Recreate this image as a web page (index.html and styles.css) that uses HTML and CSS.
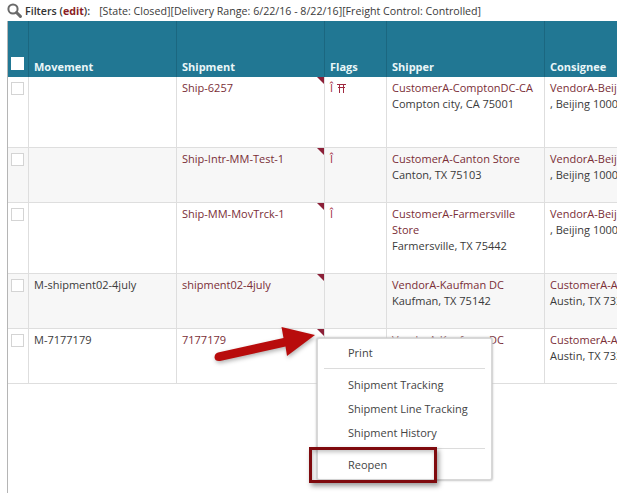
FILE: index.html
```html
<!DOCTYPE html>
<html lang="en">
<head>
<meta charset="utf-8">
<title>Shipments</title>
<link rel="stylesheet" href="styles.css">
</head>
<body>
<div class="filters">
  <svg class="search" width="15" height="15" viewBox="0 0 15 15"><circle cx="6" cy="6" r="4.6" fill="none" stroke="#6a6a6a" stroke-width="2"/><path d="M9.500 9.500 13.400 13.400" stroke="#6a6a6a" stroke-width="3" stroke-linecap="round"/></svg>
  <span class="filters-label">Filters (<span class="edit">edit</span>):</span>
  <span class="filters-value">[State: Closed][Delivery Range: 6/22/16 - 8/22/16][Freight Control: Controlled]</span>
</div>
<div class="grid-wrap">
<table class="grid">
  <colgroup>
    <col class="c-check"><col class="c-move"><col class="c-ship"><col class="c-flags"><col class="c-shipper"><col class="c-cons">
  </colgroup>
  <thead>
    <tr>
      <th><span class="box box-head"></span></th>
      <th>Movement</th><th>Shipment</th><th>Flags</th><th>Shipper</th><th>Consignee</th>
    </tr>
  </thead>
  <tbody>
    <tr class="r1">
      <td><span class="box"></span></td><td></td>
      <td class="mark"><a>Ship-6257</a></td>
      <td><a class="flag">Î</a> <svg class="torii" width="9" height="9" viewBox="0 0 9 9"><path d="M0 .5H9M1 3.500H8M2.500 .5V9M6.500 .5V9" fill="none" stroke="#a02a40" stroke-width="1"/></svg></td>
      <td><a>CustomerA-ComptonDC-CA</a><br>Compton city, CA 75001</td>
      <td><a>VendorA-Beijing</a><br>, Beijing 100000</td>
    </tr>
    <tr class="r2 alt">
      <td><span class="box"></span></td><td></td>
      <td class="mark"><a>Ship-Intr-MM-Test-1</a></td>
      <td><a class="flag">Î</a></td>
      <td><a>CustomerA-Canton Store</a><br>Canton, TX 75103</td>
      <td><a>VendorA-Beijing</a><br>, Beijing 100000</td>
    </tr>
    <tr class="r3">
      <td><span class="box"></span></td><td></td>
      <td class="mark"><a>Ship-MM-MovTrck-1</a></td>
      <td><a class="flag">Î</a></td>
      <td><a>CustomerA-Farmersville Store</a><br>Farmersville, TX 75442</td>
      <td><a>VendorA-Beijing</a><br>, Beijing 100000</td>
    </tr>
    <tr class="r4 alt">
      <td><span class="box"></span></td><td>M-shipment02-4july</td>
      <td class="mark"><a>shipment02-4july</a></td>
      <td></td>
      <td><a>VendorA-Kaufman DC</a><br>Kaufman, TX 75142</td>
      <td><a>CustomerA-Austin</a><br>Austin, TX 73301</td>
    </tr>
    <tr class="r5">
      <td><span class="box"></span></td><td>M-7177179</td>
      <td class="mark"><a>7177179</a></td>
      <td></td>
      <td><a>VendorA-Kaufman DC</a><br>Kaufman, TX 75142</td>
      <td><a>CustomerA-Austin</a><br>Austin, TX 73301</td>
    </tr>
  </tbody>
</table>
</div>
<div class="menu">
  <div class="menu-item">Print</div>
  <div class="menu-sep"></div>
  <div class="menu-item">Shipment Tracking</div>
  <div class="menu-item">Shipment Line Tracking</div>
  <div class="menu-item">Shipment History</div>
  <div class="menu-sep"></div>
  <div class="menu-item">Reopen</div>
</div>
<div class="callout"></div>
<svg class="arrow" width="110" height="40" viewBox="210 322 110 40"><path d="M218 352.500 283.500 338 281.500 327 315 335 287 356 285.500 346.500 220 361Q215 361.500 214.500 357.500 214.500 353.500 218 352.500Z" fill="#b80c0c"/></svg>
</body>
</html>
```
FILE: styles.css
```css
html, body {
  margin: 0;
  height: 100%;
  overflow: hidden;
  background: #fff;
}
body {
  font: 11px/16px "Open Sans", sans-serif;
  color: #3a3a3a;
}
.filters {
  height: 21px;
  display: flex;
  align-items: center;
  padding-left: 7px;
  box-sizing: border-box;
  font-size: 10.67px;
  white-space: nowrap;
}
.search { margin-right: 3px; flex: none; }
.filters-label { font-weight: 600; color: #333; margin-right: 9px; }
.edit { color: #8a1c24; font-weight: 700; }
.grid-wrap {
  margin-left: 7px;
  border-left: 1px solid #b5b5b5;
  height: 472px;
  overflow: hidden;
}
.grid {
  border-collapse: collapse;
  table-layout: fixed;
  width: 720px;
}
.c-check { width: 20px; }
.c-move, .c-ship { width: 148px; }
.c-flags { width: 62px; }
.c-shipper { width: 158px; }
.c-cons { width: 184px; }
th {
  height: 56px;
  box-sizing: border-box;
  background: #217793;
  color: #eaf6f8;
  font-weight: 700;
  text-align: left;
  vertical-align: bottom;
  padding: 0 6px 2px 5.5px;
  border-left: 1px solid #1b6780;
}
th:first-child { padding: 0 0 0 3px; border-left: 0; }
td {
  box-sizing: border-box;
  vertical-align: top;
  padding: 3px 6px 0 5.5px;
  border-left: 1px solid #dedede;
  border-bottom: 1px solid #dedede;
  white-space: normal;
}
td:first-child { padding: 5px 0 0 3px; border-left: 0; }
.alt td { background: #f7f7f7; }
.r1 td { height: 70px; }
.r2 td { height: 55px; }
.r3 td { height: 71px; }
.r4 td { height: 55px; }
.r5 td { height: 55px; }
td a { color: #7a2e36; }
td a.flag { color: #a02a40; }
.mark { position: relative; }
.mark::after {
  content: "";
  position: absolute;
  top: 0;
  right: 0;
  border-style: solid;
  border-width: 0 7px 7px 0;
  border-color: transparent #8c2038 transparent transparent;
}
.box {
  display: block;
  width: 11px;
  height: 11px;
  background: #fff;
  border: 1px solid #d4d4d4;
}
.box-head { margin-bottom: 7px; border-color: #fff; }
.torii { vertical-align: -1px; margin-left: 1px; }
.menu {
  position: absolute;
  left: 317px;
  top: 338px;
  width: 175px;
  height: 142px;
  box-sizing: border-box;
  padding: 2px 6px 0;
  background: #fff;
  border: 1px solid #d8d8d8;
  border-radius: 2px;
  box-shadow: 0 0 2px 1px #c8c8c8;
}
.menu-item {
  height: 24px;
  line-height: 24px;
  padding-left: 24px;
  color: #444;
}
.menu-sep {
  height: 1px;
  background: #dcdcdc;
  margin: 3px 0 4px;
}
.callout {
  position: absolute;
  left: 309px;
  top: 447px;
  width: 128px;
  height: 36px;
  box-sizing: border-box;
  border: 3px solid #7f0a0e;
  box-shadow: 2px 3px 5px rgba(0, 0, 0, .4), inset 1px 2px 4px rgba(0, 0, 0, .25);
}
.arrow {
  position: absolute;
  left: 210px;
  top: 322px;
  filter: drop-shadow(1px 2px 2px rgba(0, 0, 0, .3));
}
```
